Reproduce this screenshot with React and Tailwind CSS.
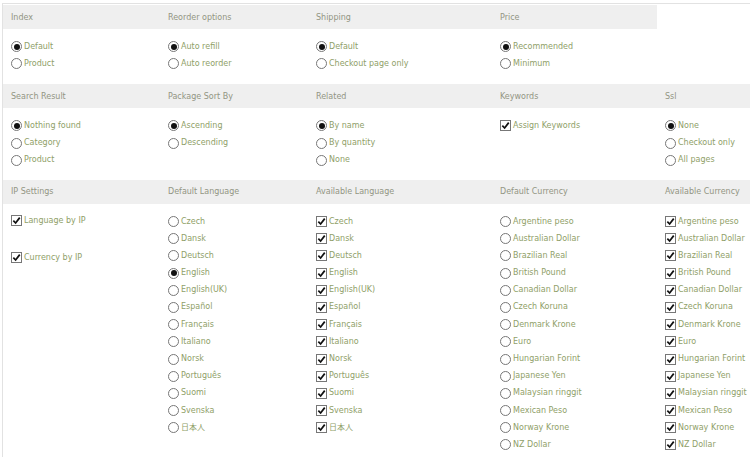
import React from 'react';

const cols = 'grid grid-cols-[157px_148px_184px_165px_1fr]';

const Radio = ({ checked }) => (
  <span className="mr-[2px] inline-grid h-[11px] w-[11px] shrink-0 place-items-center rounded-full border border-[#777] bg-white">
    {checked && <span className="h-[6px] w-[6px] rounded-full bg-[#111]" />}
  </span>
);

const Check = () => (
  <span className="mr-[2px] inline-grid h-[11px] w-[11px] shrink-0 place-items-center border border-[#777] bg-white">
    <svg viewBox="0 0 10 10" className="h-[9px] w-[9px]">
      <path d="M1.5 5.2 L4 7.8 L8.6 1.8" fill="none" stroke="#111" strokeWidth="1.9" />
    </svg>
  </span>
);

const Option = ({ type, checked, label, className = '' }) => (
  <div className={`flex h-[17.2px] items-center whitespace-nowrap text-[8px] text-[#8fa068] ${className}`}>
    {type === 'check' ? <Check /> : <Radio checked={checked} />}
    <span>{label}</span>
  </div>
);

const Group = ({ items, checked, type, pb = 'pb-[12px]' }) => (
  <div className={`px-2 pt-[9px] ${pb}`}>
    {items.map((label) => (
      <Option key={label} type={type} checked={type === 'check' || label === checked} label={label} />
    ))}
  </div>
);

const Header = ({ titles, full = true }) => (
  <div className={cols}>
    {titles.map((title, i) => (
      <div
        key={i}
        className={`flex h-6 items-center whitespace-nowrap px-2 pt-px text-[8px] text-[#929583] ${title === null && !full ? 'bg-white' : 'bg-[#efefef]'}`}
      >
        {title}
      </div>
    ))}
  </div>
);

const languages = ['Czech', 'Dansk', 'Deutsch', 'English', 'English(UK)', 'Español', 'Français', 'Italiano', 'Norsk', 'Português', 'Suomi', 'Svenska', '日本人'];
const currencies = ['Argentine peso', 'Australian Dollar', 'Brazilian Real', 'British Pound', 'Canadian Dollar', 'Czech Koruna', 'Denmark Krone', 'Euro', 'Hungarian Forint', 'Japanese Yen', 'Malaysian ringgit', 'Mexican Peso', 'Norway Krone', 'NZ Dollar'];

export default function App() {
  return (
    <div className="h-[457px] w-[750px] overflow-hidden bg-white pt-[3px] font-['DejaVu_Sans','Noto_Sans_CJK_JP',sans-serif]">
      <div className="ml-[2px] border-t border-l border-[#e2e2e2] pt-px">
        <Header titles={['Index', 'Reorder options', 'Shipping', 'Price', null]} full={false} />
        <div className={cols}>
          <Group items={['Default', 'Product']} checked="Default" />
          <Group items={['Auto refill', 'Auto reorder']} checked="Auto refill" />
          <Group items={['Default', 'Checkout page only']} checked="Default" />
          <Group items={['Recommended', 'Minimum']} checked="Recommended" />
          <div />
        </div>

        <Header titles={['Search Result', 'Package Sort By', 'Related', 'Keywords', 'Ssl']} />
        <div className={cols}>
          <Group items={['Nothing found', 'Category', 'Product']} checked="Nothing found" pb="pb-[11px]" />
          <Group items={['Ascending', 'Descending']} checked="Ascending" />
          <Group items={['By name', 'By quantity', 'None']} checked="By name" pb="pb-[11px]" />
          <Group items={['Assign Keywords']} type="check" />
          <Group items={['None', 'Checkout only', 'All pages']} checked="None" pb="pb-[11px]" />
        </div>

        <Header titles={['IP Settings', 'Default Language', 'Available Language', 'Default Currency', 'Available Currency']} />
        <div className={cols}>
          <div className="px-2 pt-2">
            <Option type="check" label="Language by IP" />
            <Option type="check" label="Currency by IP" className="mt-5" />
          </div>
          <Group items={languages} checked="English" />
          <Group items={languages} type="check" />
          <Group items={currencies} checked="" />
          <Group items={currencies} type="check" />
        </div>
      </div>
    </div>
  );
}
